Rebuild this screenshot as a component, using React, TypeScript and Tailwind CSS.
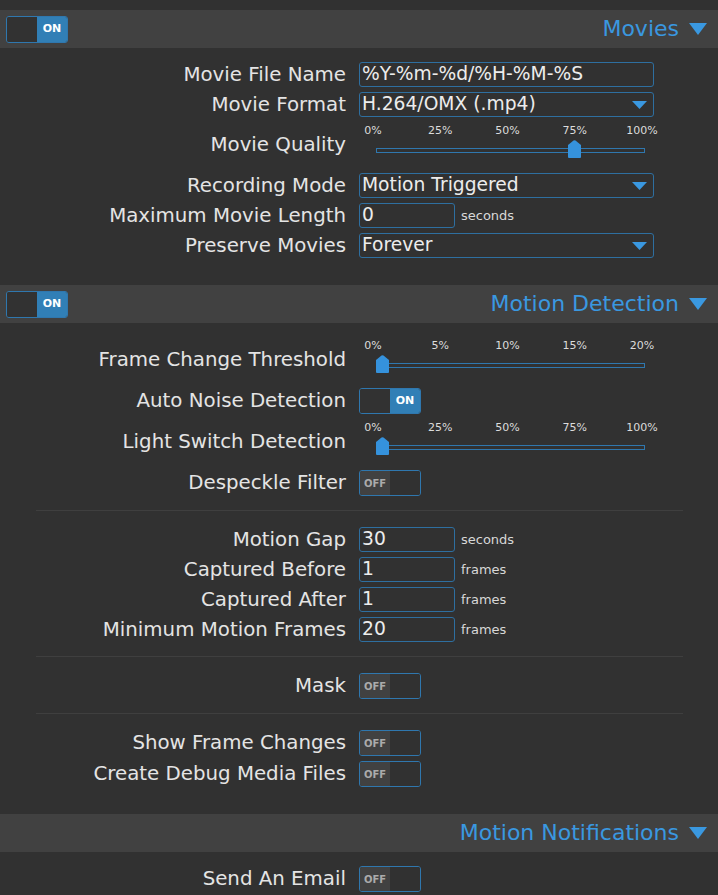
import { type ReactNode } from "react";

const Caret = ({ big }: { big?: boolean }) =>
  big ? (
    <svg width="18" height="12" viewBox="0 0 18 12" aria-hidden={true}>
      <polygon points="0,0 18,0 9,12" fill="#3a98e0" />
    </svg>
  ) : (
    <svg width="15" height="8" viewBox="0 0 15 8" aria-hidden={true}>
      <polygon points="0,0 15,0 7.5,8" fill="#3a98e0" />
    </svg>
  );

const Toggle = ({ on, tall }: { on?: boolean; tall?: boolean }) => (
  <div
    className={`flex w-[62px] ${tall ? "h-[27px]" : "h-[26px]"} border border-[#2f77ae] rounded-[3px] overflow-hidden`}
  >
    {on ? (
      <>
        <div className="flex-1 bg-[#323232]" />
        <div className="flex-1 bg-[#317fb6] text-white font-bold text-[11px] flex items-center justify-center">
          ON
        </div>
      </>
    ) : (
      <>
        <div className="flex-1 bg-[#414141] text-[#ababab] font-bold text-[10px] flex items-center justify-center">
          OFF
        </div>
        <div className="flex-1 bg-[#313131]" />
      </>
    )}
  </div>
);

const SectionHeader = ({ title, toggle = true }: { title: string; toggle?: boolean }) => (
  <div className="h-[38px] bg-[#414141] flex items-center justify-between pl-[6px] pr-[11px]">
    {toggle ? <Toggle on tall /> : <span />}
    <div className="flex items-center gap-[10px] text-[22px] leading-none text-[#3a98e0]">
      {title}
      <Caret big />
    </div>
  </div>
);

const Row = ({ label, children }: { label: string; children: ReactNode }) => (
  <div className="flex items-center">
    <div className="w-[346px] text-right text-[19.8px] leading-none text-[#e4e4e4]">
      {label}
    </div>
    <div className="ml-[13px] flex items-center">{children}</div>
  </div>
);

const TextInput = ({ value, narrow }: { value: string; narrow?: boolean }) => (
  <div
    className={`${narrow ? "w-[96px]" : "w-[295px]"} h-[25px] border border-[#2e6fa0] rounded-[3px] pl-[2px] flex items-center text-[18.7px] leading-none text-[#ececec]`}
  >
    {value}
  </div>
);

const Select = ({ value }: { value: string }) => (
  <div className="w-[295px] h-[25px] border border-[#2e6fa0] rounded-[3px] pl-[2px] pr-[6px] flex items-center justify-between text-[18.7px] leading-none text-[#ececec]">
    {value}
    <Caret />
  </div>
);

const Unit = ({ text }: { text: string }) => (
  <span className="ml-[6px] text-[13px] text-[#d8d8d8]">{text}</span>
);

const Slider = ({ ticks, pct }: { ticks: string[]; pct: number }) => (
  <div className="relative w-[295px] h-[46px]">
    {ticks.map((t, i) => (
      <span
        key={t}
        className="absolute top-[2px] -translate-x-1/2 text-[11px] leading-[14px] text-[#dcdcdc]"
        style={{ left: `${14 + (i * 269) / (ticks.length - 1)}px` }}
      >
        {t}
      </span>
    ))}
    <div className="absolute left-[17px] top-[26px] w-[269px] h-[5px] border border-[#2f77ae]" />
    <svg
      className="absolute top-[18px]"
      style={{ left: `${23 + pct * 257 - 6.5}px` }}
      width="13"
      height="18"
      viewBox="0 0 13 18"
      aria-hidden={true}
    >
      <path d="M5.5 0.6 Q6.5 0 7.5 0.6 L13 5 L13 17 Q13 18 12 18 L1 18 Q0 18 0 17 L0 5 Z" fill="#3592dc" />
    </svg>
  </div>
);

const Divider = () => <div className="ml-[36px] mr-[35px] h-px bg-[#3f3f3f] mt-[14px] mb-[16px]" />;

const pct100 = ["0%", "25%", "50%", "75%", "100%"];

export default function App() {
  return (
    <div className="min-h-screen bg-[#313131] pt-[10px] font-['DejaVu_Sans',sans-serif]">
      <SectionHeader title="Movies" />
      <div className="pt-[14px] pb-[27px] flex flex-col gap-[5px]">
        <Row label="Movie File Name">
          <TextInput value="%Y-%m-%d/%H-%M-%S" />
        </Row>
        <Row label="Movie Format">
          <Select value="H.264/OMX (.mp4)" />
        </Row>
        <Row label="Movie Quality">
          <Slider ticks={pct100} pct={0.75} />
        </Row>
        <Row label="Recording Mode">
          <Select value="Motion Triggered" />
        </Row>
        <Row label="Maximum Movie Length">
          <TextInput value="0" narrow />
          <Unit text="seconds" />
        </Row>
        <Row label="Preserve Movies">
          <Select value="Forever" />
        </Row>
      </div>

      <SectionHeader title="Motion Detection" />
      <div className="pt-[14px] pb-[27px] flex flex-col">
        <div className="flex flex-col gap-[5px]">
          <Row label="Frame Change Threshold">
            <Slider ticks={["0%", "5%", "10%", "15%", "20%"]} pct={0} />
          </Row>
          <Row label="Auto Noise Detection">
            <Toggle on />
          </Row>
          <Row label="Light Switch Detection">
            <Slider ticks={pct100} pct={0} />
          </Row>
          <Row label="Despeckle Filter">
            <Toggle />
          </Row>
        </div>
        <Divider />
        <div className="flex flex-col gap-[5px]">
          <Row label="Motion Gap">
            <TextInput value="30" narrow />
            <Unit text="seconds" />
          </Row>
          <Row label="Captured Before">
            <TextInput value="1" narrow />
            <Unit text="frames" />
          </Row>
          <Row label="Captured After">
            <TextInput value="1" narrow />
            <Unit text="frames" />
          </Row>
          <Row label="Minimum Motion Frames">
            <TextInput value="20" narrow />
            <Unit text="frames" />
          </Row>
        </div>
        <Divider />
        <Row label="Mask">
          <Toggle />
        </Row>
        <Divider />
        <div className="flex flex-col gap-[5px]">
          <Row label="Show Frame Changes">
            <Toggle />
          </Row>
          <Row label="Create Debug Media Files">
            <Toggle />
          </Row>
        </div>
      </div>

      <SectionHeader title="Motion Notifications" toggle={false} />
      <div className="pt-[14px] pb-[10px] flex flex-col gap-[5px]">
        <Row label="Send An Email">
          <Toggle />
        </Row>
      </div>
    </div>
  );
}
